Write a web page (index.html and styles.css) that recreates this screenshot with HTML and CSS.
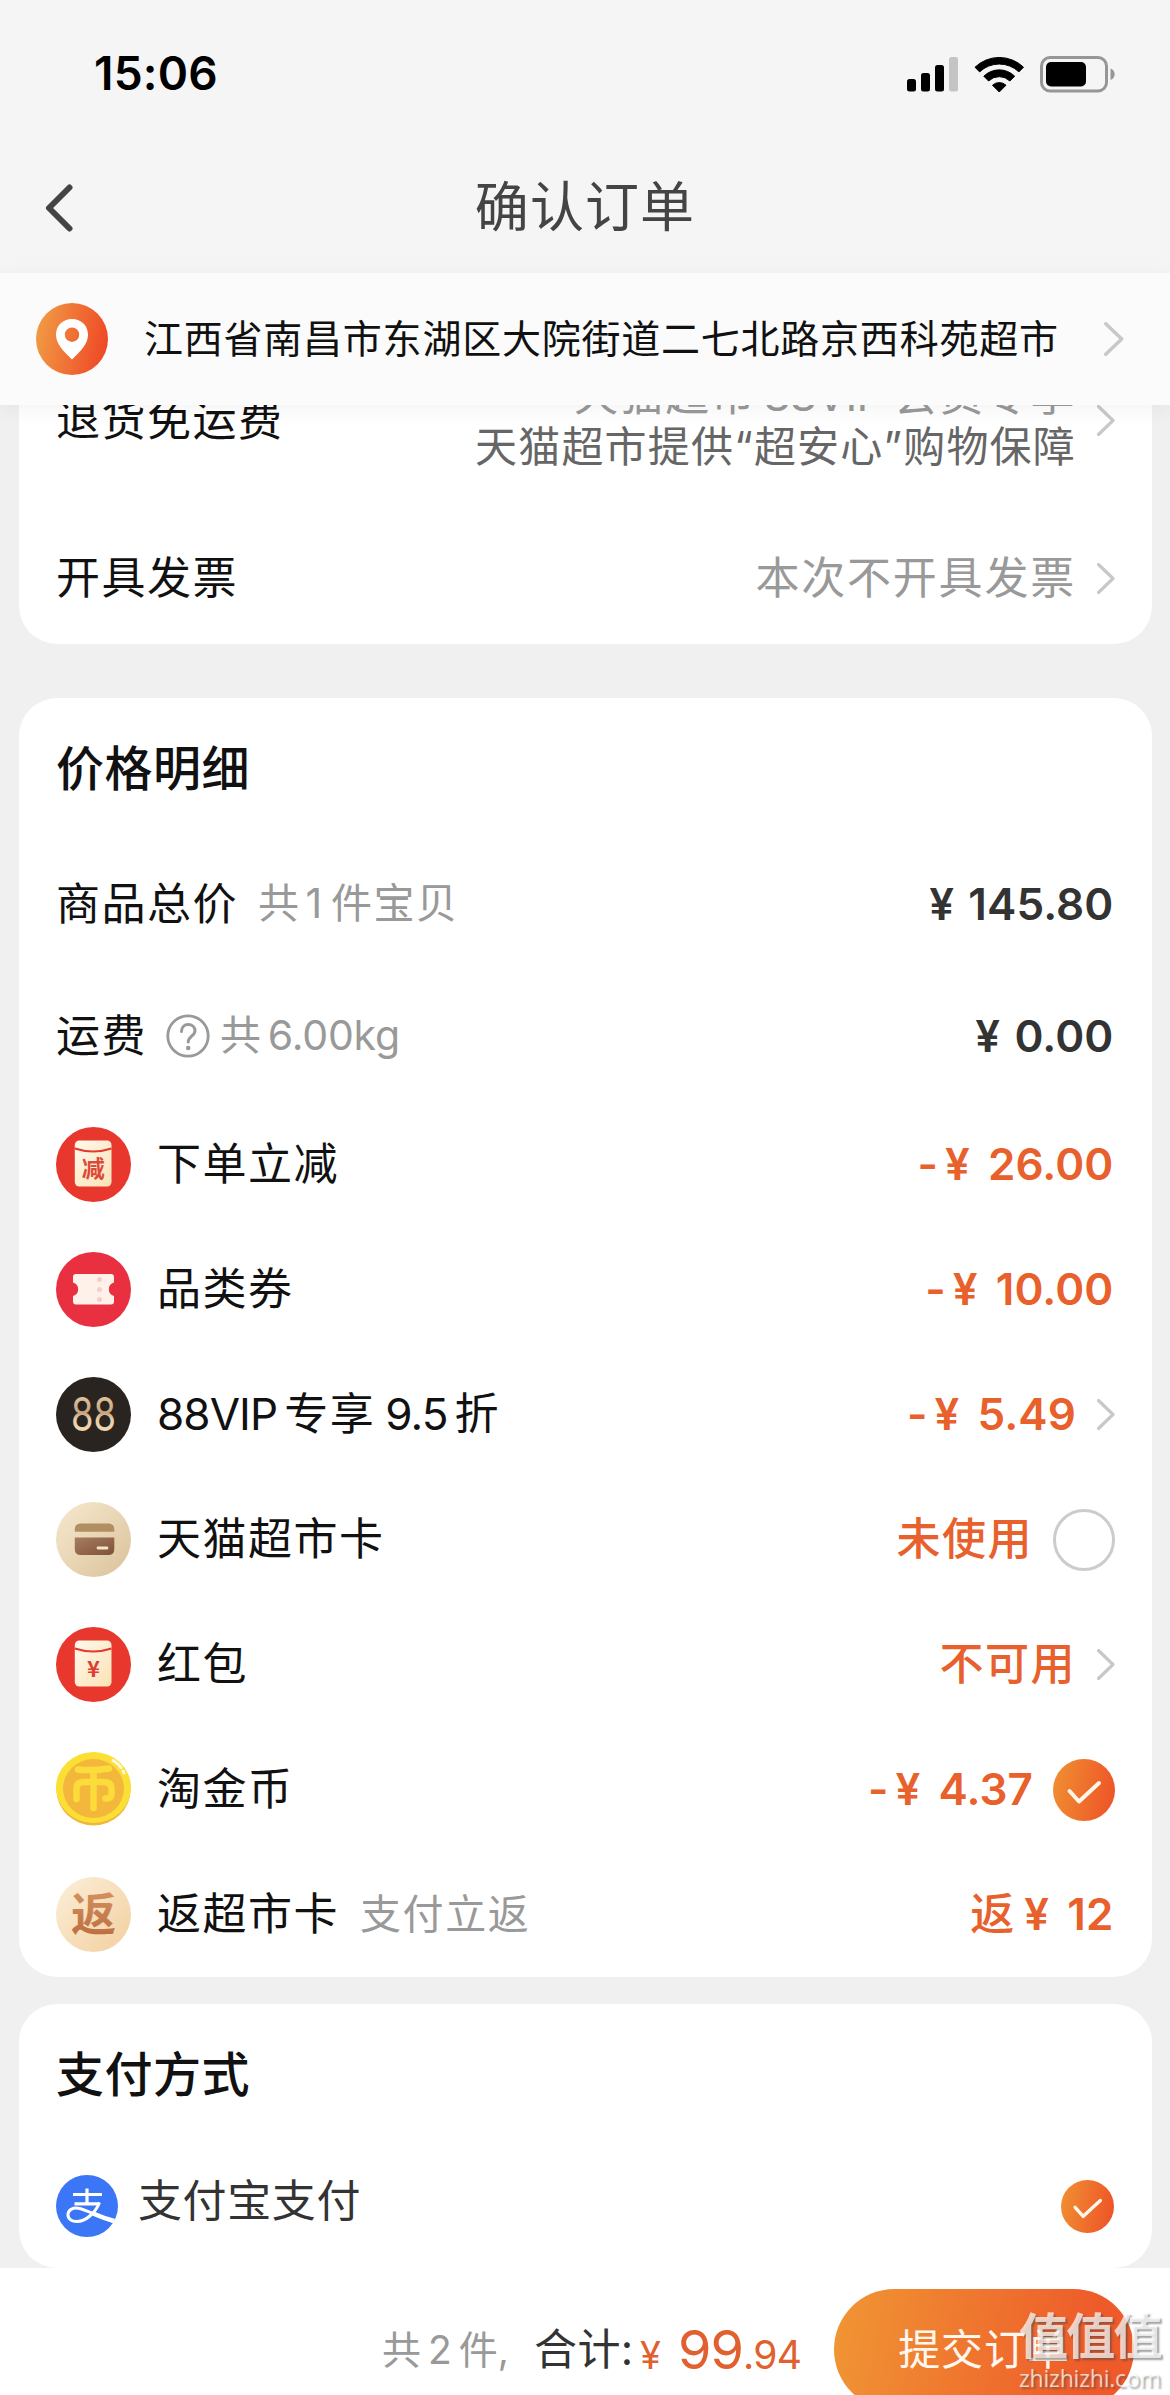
FILE: index.html
```html
<!DOCTYPE html>
<html lang="zh-CN">
<head>
<meta charset="utf-8">
<title>确认订单</title>
<link rel="stylesheet" href="styles.css">
</head>
<body>
<svg class="defs" aria-hidden="true">
  <defs>
    <linearGradient id="orange" x1="0" y1="0.4" x2="1" y2="0.6"><stop offset="0" stop-color="#f08d32"/><stop offset="1" stop-color="#ee5427"/></linearGradient>
    <linearGradient id="pin" x1="0" y1="0.4" x2="1" y2="0.6"><stop offset="0" stop-color="#f19a44"/><stop offset="1" stop-color="#ee4826"/></linearGradient>
    <linearGradient id="cream" x1="0" y1="0" x2="1" y2="1"><stop offset="0" stop-color="#fff9ee"/><stop offset="1" stop-color="#fbe2b4"/></linearGradient>
    <linearGradient id="beige" x1="0" y1="0" x2="1" y2="1"><stop offset="0" stop-color="#f7e9cf"/><stop offset="1" stop-color="#dac29a"/></linearGradient>
    <linearGradient id="sand" x1="0" y1="0" x2="1" y2="1"><stop offset="0" stop-color="#fbefd9"/><stop offset="1" stop-color="#f3cf9f"/></linearGradient>
    <linearGradient id="gold" x1="0" y1="0" x2="0" y2="1"><stop offset="0" stop-color="#f3d9b0"/><stop offset=".5" stop-color="#c4a480"/><stop offset=".6" stop-color="#e9cda6"/><stop offset="1" stop-color="#f6dfbd"/></linearGradient>
    <linearGradient id="brown" x1="0" y1="0" x2="1" y2="1"><stop offset="0" stop-color="#a87c60"/><stop offset="1" stop-color="#7d5238"/></linearGradient>
    <linearGradient id="tan" x1="0" y1="0" x2="0" y2="1"><stop offset="0" stop-color="#d99a68"/><stop offset="1" stop-color="#b9683b"/></linearGradient>
    <clipPath id="disc"><circle cx="31" cy="31" r="31"/></clipPath>
    <symbol id="chevron" viewBox="0 0 18 31"><path d="M1.5 1.5 16 15.5 1.5 29.5" fill="none" stroke="#c8c8c8" stroke-width="3.2" stroke-linecap="round" stroke-linejoin="round"/></symbol>
    <symbol id="check" viewBox="0 0 62 62"><circle cx="31" cy="31" r="31" fill="url(#orange)"/><path d="M16.5 32 26 42.5 46 24" fill="none" stroke="#fff7ea" stroke-width="4" stroke-linecap="round" stroke-linejoin="round"/></symbol>
  </defs>
</svg>
<div class="page">
  <header class="top">
    <div class="status">
      <span class="time">15:06</span>
      <svg width="208" height="38" viewBox="0 0 208 38">
        <rect x="0" y="24" width="9" height="12.5" rx="2.5"/><rect x="14" y="18" width="9" height="18.5" rx="2.5"/><rect x="28" y="10" width="9" height="26.5" rx="2.5"/><rect x="42" y="2" width="9" height="34.5" rx="2.5" fill="#c4c4c4"/>
        <path d="M68 12.2a35 35 0 0 1 48.500 0l-4.600 4.700a28.500 28.500 0 0 0-39.300 0zM76.800 21.200a22 22 0 0 1 30.900 0l-4.800 4.800a15.200 15.200 0 0 0-21.300 0zM85.500 30.200a10 10 0 0 1 13.500 0l-6.750 6.800z" stroke="#000" stroke-width="1"/>
        <rect x="134.500" y="2.500" width="65" height="33.500" rx="8.500" fill="none" stroke="#969696" stroke-width="3"/>
        <rect x="139" y="7" width="40" height="24.500" rx="5"/>
        <path d="M203.500 13.500c5.500 2 5.500 9.500 0 11.500z" fill="#969696"/>
      </svg>
    </div>
    <div class="nav">
      <svg class="back" width="30" height="50" viewBox="0 0 30 50"><path d="M26.500 4.500 6 25 26.500 45.500" fill="none" stroke="#444" stroke-width="6" stroke-linecap="round" stroke-linejoin="round"/></svg>
      <h1>确认订单</h1>
    </div>
  </header>
  <div class="address">
    <svg width="72" height="72" viewBox="0 0 72 72"><circle cx="36" cy="36" r="36" fill="url(#pin)"/><path fill="#fff" fill-rule="evenodd" d="M36 16c9.500 0 16 7 16 15.500C52 41 45 47.500 36 56.500 27 47.500 20 41 20 31.500 20 23 26.500 16 36 16zm0 8.500a7.200 7.200 0 1 0 0 14.400 7.200 7.200 0 0 0 0-14.400z"/></svg>
    <span class="address-text">江西省南昌市东湖区大院街道二七北路京西科苑超市</span>
    <svg class="chev" width="20" height="34"><use href="#chevron"/></svg>
  </div>

  <main class="content">
    <section class="card card-first">
      <div class="row row-service"><span class="label">退货免运费</span><span class="lines"><span class="service-a">天猫超市<i class="thin"></i><span class="latin">88VIP</span><i class="thin wide"></i>会员专享</span><span class="service-b">天猫超市提供“超安心”购物保障</span></span><svg class="chev" width="18" height="31"><use href="#chevron"/></svg></div>
      <div class="row row-tall"><span class="label">开具发票</span><span class="hint hint-end">本次不开具发票</span><svg class="chev" width="18" height="31"><use href="#chevron"/></svg></div>
    </section>

    <section class="card card-price">
      <h2>价格明细</h2>
      <div class="row row-tall"><span class="label">商品总价</span><span class="note">共<i class="thin slim"></i>1<i class="thin"></i>件宝贝</span><span class="amount dark end">¥ 145.80</span></div>
      <div class="row row-tall"><span class="label">运费</span>
        <svg class="help" width="44" height="44" viewBox="0 0 44 44" fill="none" stroke="#999"><circle cx="22" cy="22" r="20.200" stroke-width="2.800"/><path d="M15.500 17.500c0-4 2.800-7 6.700-7s6.800 2.600 6.800 6.200c0 5.300-6.800 5.800-6.800 11.300" stroke-width="3" stroke-linecap="round"/><circle cx="22.200" cy="34" r="2.300" fill="#999" stroke="none"/></svg>
        <span class="note note-weight">共<i class="thin"></i>6.00kg</span><span class="amount dark end">¥ 0.00</span></div>

      <div class="row">
        <svg class="icon" width="75" height="75" viewBox="0 0 75 75"><circle cx="37.500" cy="37.500" r="37.500" fill="#e8382d"/><rect x="18.800" y="13.500" width="36.700" height="46" rx="4.500" fill="url(#cream)"/><path d="M18.800 21.500q18.350 6 36.700 0" fill="none" stroke="#e8382d" stroke-width="2.200"/><text x="37.200" y="49.500" class="glyph" font-size="23" fill="#dd4a3a" text-anchor="middle">减</text></svg>
        <span class="label">下单立减</span><span class="amount end">-<i class="thin"></i>¥<i class="thin gap"></i>26.00</span></div>
      <div class="row">
        <svg class="icon" width="75" height="75" viewBox="0 0 75 75"><circle cx="37.500" cy="37.500" r="37.500" fill="#e93041"/><path d="M20 22h35q3 0 3 3v5.500a7 7 0 0 0 0 13.500v5.500q0 3-3 3H20q-3 0-3-3V44a7 7 0 0 0 0-13.500V25q0-3 3-3z" fill="#fdf1ea"/><g fill="#f3cfc6"><circle cx="43.500" cy="27.500" r="2.500"/><circle cx="43.500" cy="37.500" r="2.500"/><circle cx="43.500" cy="47.500" r="2.500"/></g></svg>
        <span class="label">品类券</span><span class="amount end">-<i class="thin"></i>¥<i class="thin gap"></i>10.00</span></div>
      <div class="row">
        <svg class="icon" width="75" height="75" viewBox="0 0 75 75"><circle cx="37.500" cy="37.500" r="37.500" fill="#2a2421"/><text x="15" y="53.500" class="digits" font-size="47" textLength="45" lengthAdjust="spacingAndGlyphs" fill="url(#gold)">88</text></svg>
        <span class="label"><span class="latin">88VIP</span><i class="thin"></i>专享<i class="thin wide"></i><span class="latin">9.5</span><i class="thin"></i>折</span><span class="amount">-<i class="thin"></i>¥<i class="thin gap"></i>5.49</span><svg class="chev" width="18" height="31"><use href="#chevron"/></svg></div>
      <div class="row">
        <svg class="icon" width="75" height="75" viewBox="0 0 75 75"><circle cx="37.500" cy="37.500" r="37.500" fill="url(#beige)"/><path d="M18.800 29.800v-2.300q0-6 6-6h27.500q6 0 6 6v2.300z" fill="#b28f62"/><path d="M18.800 35.500h39.500V47q0 6-6 6H24.800q-6 0-6-6z" fill="url(#brown)"/><path d="M42 46h9" stroke="#f5e3c8" stroke-width="2.800" stroke-linecap="round"/></svg>
        <span class="label">天猫超市卡</span><span class="amount cjk">未使用</span><span class="radio"></span></div>
      <div class="row">
        <svg class="icon" width="75" height="75" viewBox="0 0 75 75"><circle cx="37.500" cy="37.500" r="37.500" fill="#e8382d"/><rect x="18.800" y="13.500" width="36.700" height="46" rx="4.500" fill="url(#cream)"/><path d="M18.800 21.500q18.350 6 36.700 0" fill="none" stroke="#e8382d" stroke-width="2.200"/><text x="37.400" y="50" class="glyph" font-size="22" fill="#dd3f34" text-anchor="middle">¥</text></svg>
        <span class="label">红包</span><span class="amount cjk">不可用</span><svg class="chev" width="18" height="31"><use href="#chevron"/></svg></div>
      <div class="row">
        <svg class="icon" width="75" height="75" viewBox="0 0 75 75"><ellipse cx="37.500" cy="38" rx="37" ry="35.500" fill="#efb83a"/><ellipse cx="37.500" cy="35.500" rx="37.500" ry="35.500" fill="#fbdf35"/><ellipse cx="37.500" cy="36.500" rx="30.500" ry="29.500" fill="#f3b73b"/><path d="M22 17.500q15 1.500 31-1M37.500 19v37M20.500 47V37q0-7 7-7h20q8 0 8 7v5q0 5-6 4.500" fill="none" stroke="#fbdc3a" stroke-width="6.500" stroke-linecap="round" stroke-linejoin="round"/><path d="M57 8.500q5 3 8 7M67 19l1 2" fill="none" stroke="#fff9dc" stroke-width="3" stroke-linecap="round"/></svg>
        <span class="label">淘金币</span><span class="amount">-<i class="thin"></i>¥<i class="thin gap"></i>4.37</span><svg class="check" width="62" height="62"><use href="#check"/></svg></div>
      <div class="row">
        <svg class="icon" width="75" height="75" viewBox="0 0 75 75"><circle cx="37.500" cy="37.500" r="37.500" fill="url(#sand)"/><text x="37.500" y="54" class="glyph" font-size="45" fill="url(#tan)" text-anchor="middle">返</text></svg>
        <span class="label">返超市卡</span><span class="note note-back">支付立返</span><span class="amount end"><span class="medium">返</span><i class="thin wide"></i>¥<i class="thin gap"></i>12</span></div>
    </section>

    <section class="card card-pay">
      <h2>支付方式</h2>
      <div class="row row-pay">
        <svg class="icon-pay" width="62" height="62" viewBox="0 0 62 62"><circle cx="31" cy="31" r="31" fill="#3a76f6"/><g clip-path="url(#disc)" fill="none" stroke="#fff"><path d="M17 19.500h29M31 13.500v16.500M18.500 28.800h25" stroke-width="3.200"/><path d="M43.500 27.500c-4 10-13.500 19-22.500 19-6.500 0-9.500-3.500-9-7.500.5-4 4.500-6.500 10-5.800C31 34.500 40 41 58.500 47" stroke-width="3"/><path d="M37 38.500q10 4.500 23 8" stroke-width="4.600"/></g></svg>
        <span class="pay-name">支付宝支付</span><svg class="check" width="53" height="53" viewBox="0 0 62 62"><use href="#check" width="62" height="62"/></svg></div>
    </section>
  </main>

  <footer class="bar">
    <span class="count">共<i class="thin"></i>2<i class="thin"></i>件,</span>
    <span class="total-label">合计:</span>
    <span class="total"><span class="yen">¥</span><span class="big">99</span><span class="small">.94</span></span>
    <button class="submit">提交订单</button>
  </footer>
  <div class="watermark"><span class="wm-a">值值值</span><span class="wm-b">zhizhizhi.com</span></div>
</div>
</body>
</html>
```
FILE: styles.css
```css
* { box-sizing: border-box; }
body {
  margin: 0;
  background: #f0f0f0;
  color: #111;
  font-family: "Inter", "Noto Sans CJK SC", sans-serif;
  line-height: 1.2;
}
svg { flex: none; display: block; }
i { font-style: normal; }
h1, h2 { margin: 0; }
.defs { position: absolute; width: 0; height: 0; }
.page {
  position: relative;
  width: 1170px;
  height: 2395px;
  overflow: hidden;
  display: flex;
  flex-direction: column;
}
.thin { display: inline-block; width: 7px; }
.thin.slim { width: 5px; }
.thin.wide { width: 10px; }
.thin.gap { width: 18px; }
.latin { letter-spacing: -0.9px; }

.top { flex: none; height: 273px; background: #f5f5f5; }
.status {
  height: 138px;
  padding: 10px 55px 0 94px;
  display: flex;
  align-items: center;
  justify-content: space-between;
}
.time { font-size: 46px; font-weight: 600; letter-spacing: 0.2px; color: #000; }
.nav {
  height: 135px;
  padding: 4px 43px 0;
  display: grid;
  grid-template-columns: 30px 1fr 30px;
  align-items: center;
}
.nav h1 {
  font-size: 54px;
  font-weight: 400;
  line-height: 70px;
  letter-spacing: 1.1px;
  text-align: center;
  color: #444;
}
.address {
  position: relative;
  z-index: 1;
  flex: none;
  height: 132px;
  padding: 0 46px 0 36px;
  display: flex;
  align-items: center;
  background: #fbfbfb;
  box-shadow: 0 4px 20px rgba(0, 0, 0, 0.05);
}
.address-text {
  margin: 0 auto 0 36px;
  font-size: 39px;
  letter-spacing: 0.77px;
  white-space: nowrap;
}

.content { flex: none; height: 1863px; overflow: hidden; }
.card {
  margin: 0 18px 0 19px;
  padding: 0 37px;
  background: #fff;
  border-radius: 38px;
}
.card-first { margin-top: -76px; }
.card-price { margin-top: 54px; }
.card-pay { margin-top: 27px; }
.card h2 {
  height: 141px;
  line-height: 142px;
  font-size: 48px;
  font-weight: 500;
  letter-spacing: 0.5px;
  margin-bottom: -1px;
}
.row { height: 125px; display: flex; align-items: center; white-space: nowrap; }
.row-tall { height: 132px; }
.row-service { height: 183px; }
.row-pay { height: 124px; }
.label { font-size: 44px; letter-spacing: 1.5px; }
.icon { margin-right: 26px; }
.icon-pay { margin-right: 20px; }
.chev { margin-left: 21px; }
.lines {
  margin-left: auto;
  padding-top: 1px;
  display: flex;
  flex-direction: column;
  text-align: right;
  line-height: 52px;
}
.service-a { font-size: 44px; letter-spacing: 1.6px; color: #999; }
.service-b { font-size: 42px; letter-spacing: 1.2px; color: #666; }
.hint { font-size: 44px; letter-spacing: 1.8px; color: #999; }
.hint-end { margin-left: auto; }
.note { margin-left: 20px; font-size: 41px; letter-spacing: 1.6px; color: #999; }
.help { margin-left: 19px; }
.note-weight { margin-left: 10px; letter-spacing: -0.2px; }
.note-back { margin-left: 21px; }
.amount {
  margin-left: auto;
  font-size: 44px;
  font-weight: 600;
  letter-spacing: 0.1px;
  color: #e8602c;
}
.amount.dark { color: #333; word-spacing: 3px; }
.amount.end { margin-right: 1.5px; }
.amount.cjk { font-weight: 500; letter-spacing: 1.5px; }
.medium { font-weight: 500; }
.radio {
  width: 62px;
  height: 62px;
  margin-left: 20px;
  border: 3px solid #ccc;
  border-radius: 50%;
}
.check { margin-left: 20px; }
.pay-name { margin-top: -10px; font-size: 44px; letter-spacing: 0.6px; color: #333; }
.row-pay .check { margin: 0 1px 0 auto; }
.glyph { font-family: "Noto Sans CJK SC", sans-serif; font-weight: 700; }
.digits { font-family: "Inter", sans-serif; font-weight: 400; }

.bar {
  flex: none;
  height: 163px;
  padding: 21px 36px 0 382px;
  display: flex;
  align-items: flex-start;
  background: #fff;
  line-height: 121px;
  white-space: nowrap;
}
.count { width: 152px; font-size: 39px; color: #999; }
.total-label { width: 106px; font-size: 43px; letter-spacing: 0.4px; color: #333; }
.total { width: 194px; color: #e0602f; }
.yen { font-size: 38px; margin-right: 17px; }
.big { font-size: 54px; letter-spacing: -1px; }
.small { font-size: 39px; letter-spacing: -0.6px; }
.submit {
  width: 300px;
  height: 121px;
  padding: 0;
  border: 0;
  border-radius: 61px;
  background: linear-gradient(100deg, #f09634, #ee5a2a 85%);
  color: #fff7ee;
  font: 400 42px/121px "Inter", "Noto Sans CJK SC", sans-serif;
  letter-spacing: 0.9px;
}
.watermark {
  position: absolute;
  left: 1019px;
  top: 2309px;
  display: flex;
  flex-direction: column;
  white-space: nowrap;
  color: rgba(255, 255, 255, 0.72);
  text-shadow: 2px 2px 2px rgba(70, 70, 70, 0.5);
}
.wm-a { font-size: 49px; line-height: 56px; font-weight: 700; letter-spacing: -1.8px; }
.wm-b { font: 400 23px/26px "Open Sans", sans-serif; letter-spacing: -0.2px; }
```
